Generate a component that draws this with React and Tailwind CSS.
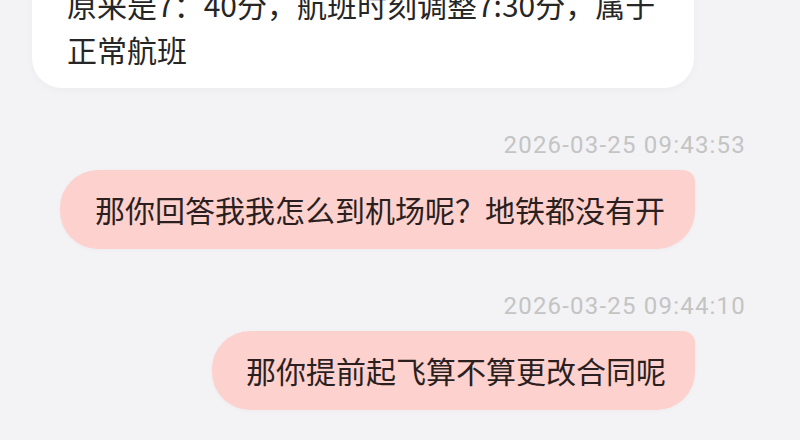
const cjk = "font-['Noto_Sans_CJK_SC',_'Noto_Sans',_sans-serif]";

const messages = [
  { time: '2026-03-25 09:43:53', text: '那你回答我我怎么到机场呢？地铁都没有开', pad: 'pl-[35px] pr-[30px]' },
  { time: '2026-03-25 09:44:10', text: '那你提前起飞算不算更改合同呢', pad: 'pl-[34px] pr-[29px]' },
];

function Outgoing({ time, text, pad }) {
  return (
    <>
      <div className="mr-[54px] mt-[42px] text-right font-['Roboto',_sans-serif] text-[24px] leading-[30px] tracking-[1.2px] text-[#c4c4c4]">
        {time}
      </div>
      <div className="mr-[105px] mt-[10px] flex justify-end">
        <div
          className={[
            'rounded-[38px] rounded-tr-[12px] bg-[#fdd1cd] py-[17px] text-[30px] leading-[45px] text-[#2b1f1f]',
            'shadow-[0_1px_4px_rgba(0,0,0,0.03)]',
            cjk,
            pad,
          ].join(' ')}
        >
          {text}
        </div>
      </div>
    </>
  );
}

export default function App() {
  return (
    <div className="h-[440px] w-[800px] overflow-hidden bg-[#f3f3f5]">
      {/* Incoming reply, scrolled partly out of view */}
      <div
        className={[
          '-mt-[35px] ml-[32px] w-[662px] rounded-[30px] bg-white pb-[16px] pl-[35px] pt-[17px]',
          'text-[30px] leading-[45px] text-[#262626] shadow-[0_2px_8px_rgba(0,0,0,0.03)]',
          cjk,
        ].join(' ')}
      >
        原来是7：40分，航班时刻调整7:30分，属于
        <br />
        正常航班
      </div>

      {messages.map((m) => (
        <Outgoing key={m.time} {...m} />
      ))}
    </div>
  );
}
